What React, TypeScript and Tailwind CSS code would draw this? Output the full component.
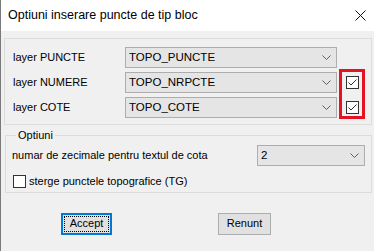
import React from "react";

const font = { fontFamily: '"Liberation Sans", Arial, sans-serif' };

function Chevron() {
  return (
    <svg width="9" height="5" viewBox="0 0 9 5" className="shrink-0">
      <path d="M0.5 0.5 L4.5 4.5 L8.5 0.5" fill="none" stroke="#606060" strokeWidth="1" />
    </svg>
  );
}

function Combo({ value, className }: { value: string; className: string }) {
  return (
    <div
      className={`flex h-[21px] items-center justify-between border border-[#adadad] bg-[#e5e5e5] pl-[3px] pr-[5px] text-[11.5px] text-black ${className}`}
    >
      <span>{value}</span>
      <Chevron />
    </div>
  );
}

function Check({ checked }: { checked?: boolean }) {
  return (
    <div className="flex h-[13px] w-[13px] shrink-0 items-center justify-center border border-[#333] bg-white">
      {checked && (
        <svg width="11" height="11" viewBox="0 0 11 11">
          <path d="M1.5 5.5 L4 8 L9.5 2.5" fill="none" stroke="#333" strokeWidth="1" />
        </svg>
      )}
    </div>
  );
}

const layers = [
  { label: "layer PUNCTE", value: "TOPO_PUNCTE", check: false },
  { label: "layer NUMERE", value: "TOPO_NRPCTE", check: true },
  { label: "layer COTE", value: "TOPO_COTE", check: true },
];

export default function App() {
  return (
    <div
      className="flex h-[251px] w-[374px] flex-col overflow-hidden border-l border-[#7a7a7a] bg-[#f0f0f0] text-[11px] text-black"
      style={font}
    >
      {/* title bar */}
      <div className="flex h-[31px] shrink-0 items-center justify-between bg-white pl-[7px] pr-[7px]">
        <span className="text-[12.5px]">Optiuni inserare puncte de tip bloc</span>
        <svg width="11" height="11" viewBox="0 0 11 11" className="mr-[1px]">
          <path d="M0.5 0.5 L10.5 10.5 M10.5 0.5 L0.5 10.5" stroke="#111" strokeWidth="1" />
        </svg>
      </div>

      {/* layers group */}
      <div className="relative ml-[3px] mt-[7px] flex h-[87px] w-[368px] flex-col gap-[4px] border border-[#dcdcdc] pl-[8px] pt-[8px]">
        {layers.map((l) => (
          <div key={l.label} className="flex h-[21px] items-center">
            <span className="w-[112px]">{l.label}</span>
            <Combo value={l.value} className="w-[212px]" />
            {l.check && (
              <div className="ml-[9px]">
                <Check checked />
              </div>
            )}
          </div>
        ))}
        <div className="absolute left-[334px] top-[30px] h-[50px] w-[26px] border-[3px] border-[#e81123]" />
      </div>

      {/* options group */}
      <fieldset className="ml-[4px] mt-[3px] w-[367px] border border-[#dcdcdc] px-[6px] pb-[2px]">
        <legend className="ml-[4px] px-[2px] leading-[14px]">Optiuni</legend>
        <div className="mt-[3px] flex h-[21px] items-center justify-between">
          <span>numar de zecimale pentru textul de cota</span>
          <Combo value="2" className="w-[108px]" />
        </div>
        <div className="mt-[7px] flex items-center gap-[3px] pl-[1px]">
          <Check />
          <span>sterge punctele topografice (TG)</span>
        </div>
      </fieldset>

      {/* buttons */}
      <div className="mt-[20px] flex items-center">
        <button className="ml-[60px] flex h-[22px] w-[51px] items-center justify-center border-2 border-[#0078d7] bg-[#e1e1e1] p-[1px]">
          <span className="flex h-full w-full items-center justify-center border border-dotted border-black">
            Accept
          </span>
        </button>
        <button className="ml-[106px] flex h-[22px] w-[53px] items-center justify-center border border-[#adadad] bg-[#e1e1e1]">
          Renunt
        </button>
      </div>
    </div>
  );
}
